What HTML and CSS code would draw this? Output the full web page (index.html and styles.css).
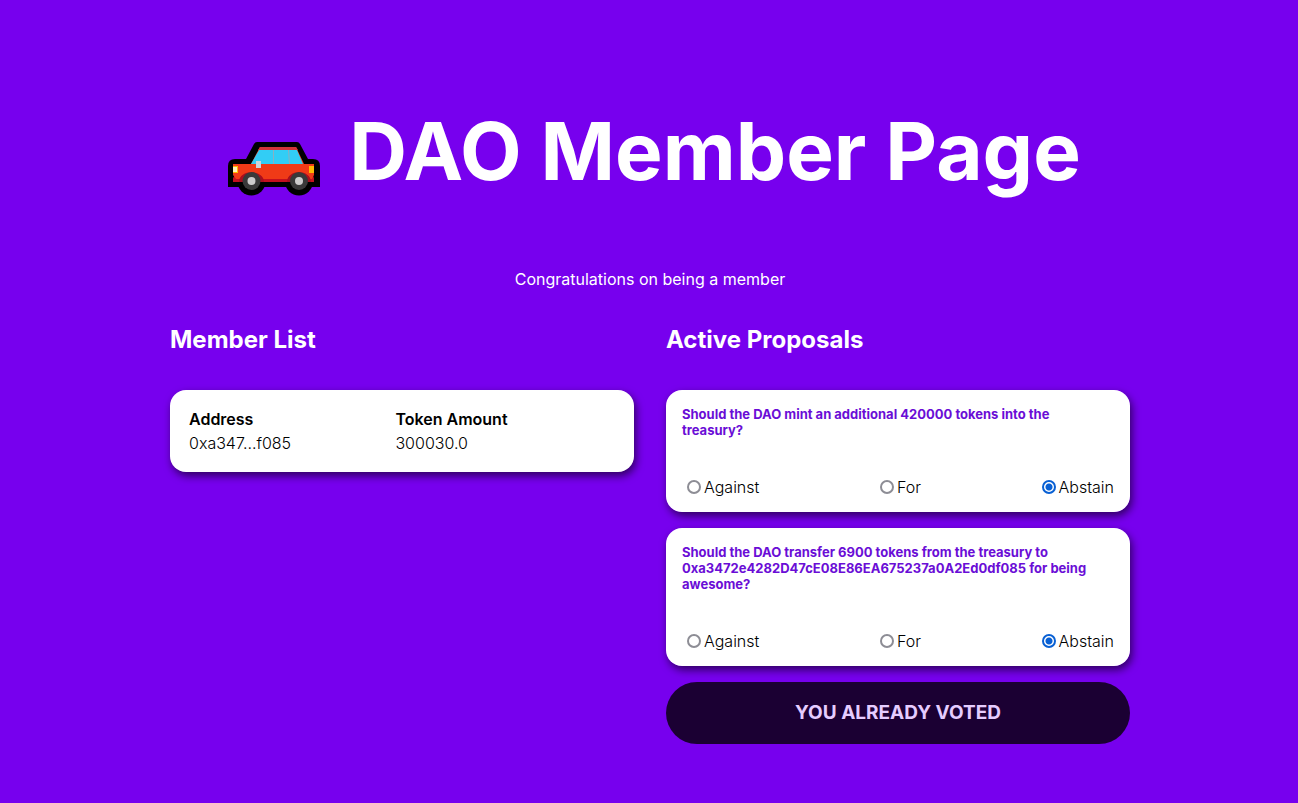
FILE: index.html
```html
<!DOCTYPE html>
<html lang="en">
<head>
<meta charset="utf-8">
<title>DAO Member Page</title>
<link rel="stylesheet" href="styles.css">
</head>
<body>
<main class="member-page">
  <h1 class="title">
    <svg class="car" viewBox="0 0 94 56" role="img" aria-label="Car">
      <path d="M1 46V25Q1 18 8 18H19L27 3Q28 1 30 1H70Q72 1 73 3L81 18H86Q93 18 93 25V46Z"/>
      <circle cx="24.500" cy="40.500" r="14"/><circle cx="72" cy="40.500" r="14"/>
      <path fill="#c50f1f" d="M6 41V37L9 33H85L87 37V41Z"/>
      <path fill="#f03a17" d="M6 23H24L33 6H69L77 23H87V34L85 38H9L6 34Z"/>
      <path fill="#32cdf5" d="M24 23L32 9H70L76 23Z"/>
      <path fill="#d13438" d="M33 6H69L71 9H31Z"/>
      <path fill="#8bafc0" d="M46 9h1v14h-1zM61 9h1l1 14h-1z"/>
      <path fill="#a80f1f" d="M12 41C12 28 37 28 37 41ZM60 41C60 28 84 28 84 41Z"/>
      <circle cx="24.500" cy="40" r="9" fill="#393939"/><circle cx="72" cy="40" r="9" fill="#393939"/>
      <circle cx="24.500" cy="40" r="4" fill="#ccc"/><circle cx="72" cy="40" r="4" fill="#ccc"/>
      <path fill="#ffb900" d="M6 25h5v7H6zM82 25h5v7h-5z"/>
      <path fill="#fff1b8" d="M6 26h4v5H6z"/>
      <path fill="#ccd5db" d="M29 20h5v7h-5z"/>
    </svg>
    <span>DAO Member Page</span>
  </h1>
  <p class="intro">Congratulations on being a member</p>
  <div class="columns">
    <section>
      <h2 class="heading">Member List</h2>
      <table class="card members">
        <thead><tr><th>Address</th><th>Token Amount</th></tr></thead>
        <tbody><tr><td>0xa347...f085</td><td>300030.0</td></tr></tbody>
      </table>
    </section>
    <section>
      <h2 class="heading">Active Proposals</h2>
      <form class="proposals">
        <fieldset class="card proposal">
          <h5 class="question">Should the DAO mint an additional 420000 tokens into the treasury?</h5>
          <div class="options">
            <label class="option"><input class="radio" type="radio" name="mint">Against</label>
            <label class="option"><input class="radio" type="radio" name="mint">For</label>
            <label class="option"><input class="radio" type="radio" name="mint" checked>Abstain</label>
          </div>
        </fieldset>
        <fieldset class="card proposal">
          <h5 class="question">Should the DAO transfer 6900 tokens from the treasury to 0xa3472e4282D47cE08E86EA675237a0A2Ed0df085 for being awesome?</h5>
          <div class="options">
            <label class="option"><input class="radio" type="radio" name="transfer">Against</label>
            <label class="option"><input class="radio" type="radio" name="transfer">For</label>
            <label class="option"><input class="radio" type="radio" name="transfer" checked>Abstain</label>
          </div>
        </fieldset>
        <button class="vote" type="submit" disabled>You Already Voted</button>
      </form>
    </section>
  </div>
</main>
</body>
</html>
```
FILE: styles.css
```css
* { box-sizing: border-box; }
body {
  margin: 0;
  background: #7700ee;
  color: #fff;
  font-family: Inter, sans-serif;
  font-size: 16px;
  line-height: 24px;
}
.member-page {
  max-width: 992px;
  margin: 0 auto;
  padding: 103px 15px 56px 17px;
}
.title {
  display: flex;
  justify-content: center;
  align-items: flex-end;
  gap: 28px;
  margin: 0;
  padding-left: 8px;
  font-size: 80px;
  font-weight: 700;
  line-height: 96px;
}
.car { width: 94px; height: 56px; margin-bottom: 2px; }
.intro { margin: 68px 0 0; text-align: center; }
.columns {
  display: grid;
  grid-template-columns: repeat(auto-fit, minmax(360px, 1fr));
  gap: 32px;
  margin-top: 33px;
}
.heading { margin: 0 0 34px; font-size: 24px; line-height: 32px; }
.card {
  width: 100%;
  margin: 0;
  border: 0;
  border-radius: 16px;
  background: #fff;
  color: #000;
  box-shadow: 2px 4px 8px rgba(0, 0, 0, 0.6);
}
.members {
  border-spacing: 0;
  padding: 17px 16px;
  text-align: left;
}
.members th, .members td { padding: 0 3px; }
.members th { font-weight: 600; }
.members td { font-weight: 300; }
.proposals { display: flex; flex-direction: column; gap: 16px; }
.proposal { padding: 16px 16px 13px; }
.question {
  margin: 0 0 37px;
  padding-right: 16px;
  color: #6a0dd6;
  font-size: 13px;
  font-weight: 700;
  line-height: 16px;
}
.options { display: flex; justify-content: space-between; font-weight: 300; }
.option { display: flex; align-items: center; }
.radio {
  appearance: none;
  width: 14px;
  height: 14px;
  margin: 0 3px 0 5px;
  border: 2px solid #8d8d95;
  border-radius: 50%;
  background: #fff;
}
.radio:checked {
  border-color: #0860d4;
  background: radial-gradient(circle, #0860d4 3px, #fff 4px);
}
.vote {
  padding: 16px;
  border: 0;
  border-radius: 32px;
  background: #1b0033;
  color: #e5ccff;
  font-family: inherit;
  font-size: 19px;
  font-weight: 700;
  line-height: 30px;
  text-transform: uppercase;
}
```
